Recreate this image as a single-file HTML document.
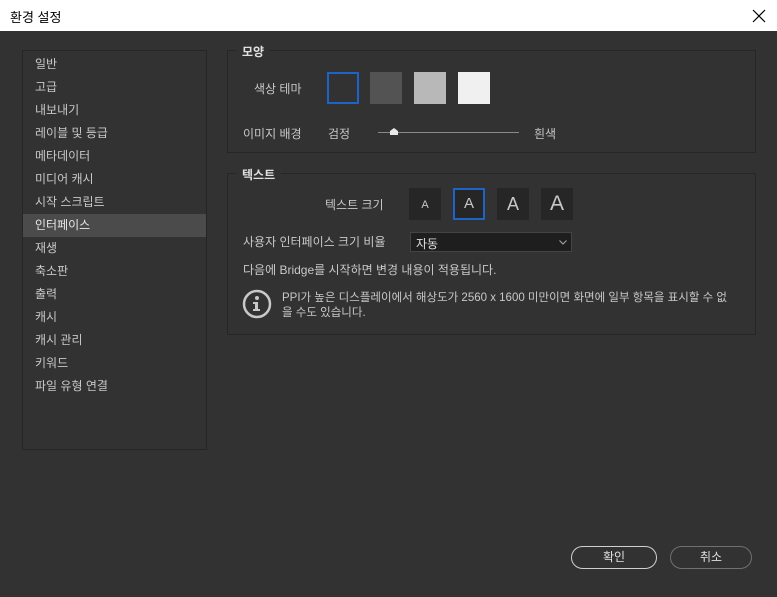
<!DOCTYPE html><html><head><meta charset="utf-8"><style>
body{margin:0;width:777px;height:597px;background:#323232;font-family:"Liberation Sans","Noto Sans CJK KR",sans-serif;font-size:12px;color:#c8c8c8;position:relative;overflow:hidden}
.a{position:absolute}
.title{left:0;top:0;width:777px;height:31px;background:#fff;color:#000;font-size:13px}
.list{left:22px;top:50px;width:183px;height:398px;border:1px solid #262626;padding-top:2px;box-sizing:content-box}
.list div{height:23px;line-height:23px;padding-left:12px;font-size:12px}
.sel{background:#4b4b4b;color:#e8e8e8}
.grp{border:1px solid #262626}
.leg{background:#323232;padding:0 6px;color:#e0e0e0;font-weight:600;font-size:12px}
.sw{width:32px;height:32px;top:72px}
.tb{width:32px;height:32px;top:188px;background:#262626;color:#c8c8c8;text-align:center;box-sizing:border-box}
.btn{height:23px;border-radius:12px;box-sizing:border-box;text-align:center;line-height:20px;color:#e0e0e0}
</style></head><body>
<div class="a title"><span class="a" style="left:10px;top:7px">환경 설정</span>
<svg class="a" style="left:752px;top:9px" width="14" height="14"><path d="M1 1L13 13M13 1L1 13" stroke="#000" stroke-width="1.2"/></svg></div>
<div class="a list" style="height:396px"><div>일반</div><div>고급</div><div>내보내기</div><div>레이블 및 등급</div><div>메타데이터</div><div>미디어 캐시</div><div>시작 스크립트</div><div class="sel">인터페이스</div><div>재생</div><div>축소판</div><div>출력</div><div>캐시</div><div>캐시 관리</div><div>키워드</div><div>파일 유형 연결</div></div>
<div class="a grp" style="left:227px;top:50px;width:527px;height:101px"></div>
<span class="a leg" style="left:236px;top:43px">모양</span>
<span class="a" style="left:254px;top:80px">색상 테마</span>
<div class="a sw" style="left:327px;border:2px solid #1e64c8;box-sizing:border-box"></div>
<div class="a sw" style="left:370px;background:#535353"></div>
<div class="a sw" style="left:414px;background:#b8b8b8"></div>
<div class="a sw" style="left:458px;background:#f0f0f0"></div>
<span class="a" style="left:243px;top:125px">이미지 배경</span>
<span class="a" style="left:328px;top:125px">검정</span>
<div class="a" style="left:378px;top:132px;width:141px;height:1px;background:#8a8a8a"></div>
<svg class="a" style="left:390px;top:128px" width="8" height="7"><path d="M4 0L8 3V7H0V3Z" fill="#e8e8e8"/></svg>
<span class="a" style="left:534px;top:125px">흰색</span>
<div class="a grp" style="left:227px;top:173px;width:527px;height:160px"></div>
<span class="a leg" style="left:236px;top:166px">텍스트</span>
<span class="a" style="left:325px;top:196px">텍스트 크기</span>
<div class="a tb" style="left:409px;font-size:11px;line-height:34px">A</div>
<div class="a tb" style="left:453px;border:2px solid #1e64c8;font-size:15px;line-height:28px">A</div>
<div class="a tb" style="left:497px;font-size:18px;line-height:32px">A</div>
<div class="a tb" style="left:541px;font-size:21px;line-height:32px">A</div>
<span class="a" style="left:243px;top:233px">사용자 인터페이스 크기 비율</span>
<div class="a" style="left:410px;top:232px;width:162px;height:20px;border:1px solid #444;background:#1e1e1e;box-sizing:border-box"><span class="a" style="left:5px;top:2px;color:#e0e0e0">자동</span><svg class="a" style="left:148px;top:7px" width="8" height="5"><path d="M0.5 0.5L4 4L7.5 0.5" stroke="#aaa" fill="none"/></svg></div>
<span class="a" style="left:243px;top:261px">다음에 Bridge를 시작하면 변경 내용이 적용됩니다.</span>
<svg class="a" style="left:242px;top:289px" width="30" height="30"><circle cx="15" cy="15" r="13" stroke="#c8c8c8" stroke-width="2.5" fill="none"/><circle cx="15" cy="9" r="2" fill="#c8c8c8"/><path d="M11 13H16V20H18V22H11V20H13V15H11Z" fill="#c8c8c8"/></svg>
<span class="a" style="left:282px;top:291px;line-height:15px;white-space:nowrap;font-size:11.5px">PPI가 높은 디스플레이에서 해상도가 2560 x 1600 미만이면 화면에 일부 항목을 표시할 수 없<br>을 수도 있습니다.</span>
<div class="a btn" style="left:571px;top:546px;width:86px;border:1.5px solid #d0d0d0">확인</div>
<div class="a btn" style="left:670px;top:546px;width:82px;border:1.5px solid #707070">취소</div>
</body></html>
